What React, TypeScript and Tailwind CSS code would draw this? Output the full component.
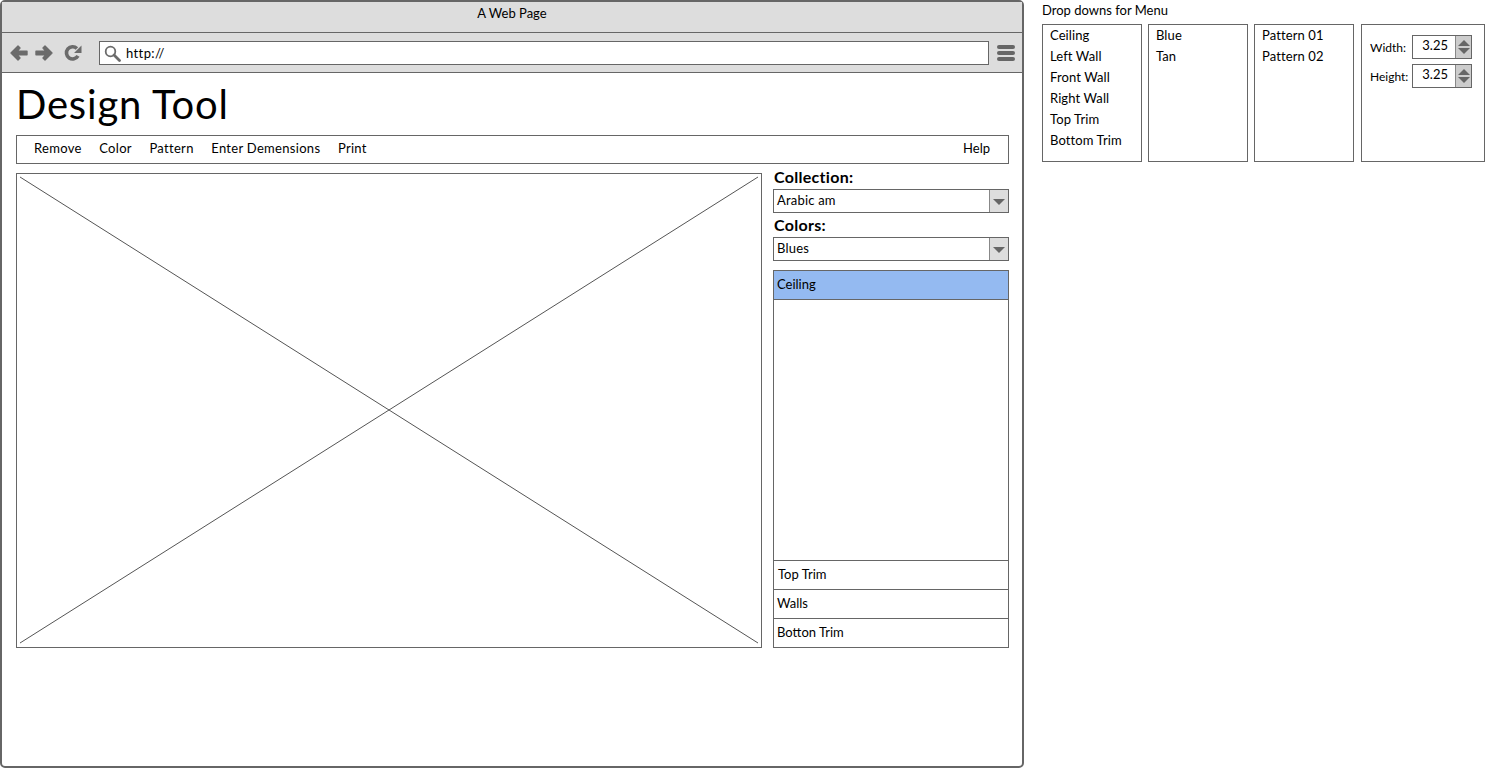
const fontStack = "font-['Lato','Noto_Sans',sans-serif]";

function ArrowIcon({ flip }: { flip?: boolean }) {
  return (
    <svg width="18" height="16" viewBox="0 0 18 16" className={flip ? "-scale-x-100" : ""}>
      <path d="M8 1 L1 8 L8 15 L10 13 L7 9.8 L17 9.8 L17 6.2 L7 6.2 L10 3 Z" fill="#6b6b6b" stroke="#6b6b6b" strokeWidth="1.4" strokeLinejoin="round" />
    </svg>
  );
}

function ReloadIcon() {
  return (
    <svg width="18" height="18" viewBox="0 0 17 17">
      <path d="M13.2 11.2 A5.8 5.8 0 1 1 12.2 4.2" fill="none" stroke="#6b6b6b" strokeWidth="3.4" />
      <path d="M16.5 1.5 L16.5 8.5 L9.5 8.5 Z" fill="#6b6b6b" />
    </svg>
  );
}

function SearchIcon() {
  return (
    <svg width="17" height="17" viewBox="0 0 17 17" className="shrink-0">
      <circle cx="6.5" cy="6.5" r="4.8" fill="none" stroke="#6b6b6b" strokeWidth="1.8" />
      <path d="M10 10 L15.5 15.5" stroke="#6b6b6b" strokeWidth="2.8" strokeLinecap="round" />
    </svg>
  );
}

function Select({ value }: { value: string }) {
  return (
    <div className="flex h-6 w-[236px] shrink-0 border border-[#666] bg-white">
      <div className="flex-1 pl-[3px] text-[13px] leading-[21px] tracking-[0.2px] text-black">{value}</div>
      <div className="flex w-[19px] items-center justify-center border-l border-[#888] bg-[#ddd]">
        <div className="mt-[2px] h-0 w-0 border-x-[6px] border-t-[6px] border-x-transparent border-t-[#666]" />
      </div>
    </div>
  );
}

function Stepper({ label }: { label: string }) {
  return (
    <div className="flex h-6 items-center justify-between">
      <span className="pt-[2px] text-[12px] text-black">{label}</span>
      <div className="flex h-6 w-[60px] border border-[#666] bg-white">
        <div className="flex-1 pr-[7px] text-right text-[13px] leading-[19px] text-black">3.25</div>
        <div className="flex w-[16px] flex-col items-center justify-center gap-[2px] border-l border-[#888] bg-[#ccc]">
          <div className="h-0 w-0 border-x-[6px] border-b-[6px] border-x-transparent border-b-[#666]" />
          <div className="h-0 w-0 border-x-[6px] border-t-[6px] border-x-transparent border-t-[#666]" />
        </div>
      </div>
    </div>
  );
}

function MenuBox({ items, width }: { items: string[]; width: string }) {
  return (
    <div className={`h-[138px] border border-[#666] bg-white pl-[7px] ${width}`}>
      {items.map((item) => (
        <div key={item} className="h-[21px] text-[13px] leading-[20px] tracking-[0.1px] text-black">
          {item}
        </div>
      ))}
    </div>
  );
}

export default function App() {
  return (
    <div className={`flex h-[768px] w-[1485px] overflow-hidden bg-white ${fontStack}`}>
      {/* browser window */}
      <div className="flex h-[768px] w-[1024px] shrink-0 flex-col rounded-[5px] border-2 border-[#666]">
        <div className="h-[31px] shrink-0 border-b border-[#666] bg-[#ddd] pt-[2px] text-center text-[13px] text-black">
          A Web Page
        </div>
        <div className="flex h-[40px] shrink-0 items-center border-b border-[#666] bg-[#ddd] pt-px">
          <div className="ml-2 flex w-[89px] items-center gap-[7px]">
            <ArrowIcon />
            <ArrowIcon flip />
            <div className="ml-[4px]">
              <ReloadIcon />
            </div>
          </div>
          <div className="flex h-6 w-[890px] items-center border border-[#666] bg-white pl-[4px]">
            <SearchIcon />
            <span className="ml-[5px] pt-[1px] text-[13px] tracking-[0.4px] text-black">http://</span>
          </div>
          <div className="ml-2 flex w-[18px] flex-col gap-[2px]">
            <div className="h-1 rounded-full bg-[#666]" />
            <div className="h-1 rounded-full bg-[#666]" />
            <div className="h-1 rounded-full bg-[#666]" />
          </div>
        </div>

        <div className="flex flex-1 flex-col px-[14px]">
          <h1 className="h-[62px] pt-[6px] text-[40px] leading-[50px] font-normal tracking-[0.8px] text-black">
            Design Tool
          </h1>
          <div className="flex h-[29px] w-[993px] items-center justify-between border border-[#666] pr-[18px] pb-[2px] pl-[17px] text-[13px] tracking-[0.3px] text-black">
            <div className="flex gap-[17.6px]">
              <span>Remove</span>
              <span>Color</span>
              <span>Pattern</span>
              <span>Enter Demensions</span>
              <span>Print</span>
            </div>
            <span className="tracking-normal">Help</span>
          </div>

          <div className="mt-[9px] flex gap-[11px]">
            <div className="h-[475px] w-[746px] border border-[#666]">
              <svg width="744" height="473" viewBox="0 0 744 473">
                <path d="M3 3 L741 469 M741 3 L3 469" stroke="#555" strokeWidth="1" fill="none" />
              </svg>
            </div>

            <div className="-mt-1 flex h-[479px] w-[236px] flex-col">
              <div className="h-5 pl-px text-[16px] leading-[16px] font-bold tracking-[0.3px] text-black">Collection:</div>
              <Select value="Arabic am" />
              <div className="h-6 pl-px text-[16px] leading-[24px] font-bold tracking-[0.3px] text-black">Colors:</div>
              <Select value="Blues" />
              <div className="mt-[9px] flex flex-1 flex-col border border-[#666] text-[13px] text-black">
                <div className="flex h-[29px] items-center border-b border-[#666] bg-[#94baf1] pl-[3px]">Ceiling</div>
                <div className="flex-1" />
                <div className="flex h-[29px] items-center border-t border-[#666] pl-[4px]">Top Trim</div>
                <div className="flex h-[29px] items-center border-t border-[#666] pl-[3px]">Walls</div>
                <div className="flex h-[29px] items-center border-t border-[#666] pl-[3px]">Botton Trim</div>
              </div>
            </div>
          </div>
        </div>
      </div>

      {/* drop downs */}
      <div className="ml-[18px] flex flex-col">
        <div className="h-6 pt-[1px] text-[13px] text-black">Drop downs for Menu</div>
        <div className="flex">
          <MenuBox width="w-[100px]" items={["Ceiling", "Left Wall", "Front Wall", "Right Wall", "Top Trim", "Bottom Trim"]} />
          <MenuBox width="ml-[6px] w-[100px]" items={["Blue", "Tan"]} />
          <MenuBox width="ml-[6px] w-[100px]" items={["Pattern 01", "Pattern 02"]} />
          <div className="ml-[7px] flex h-[138px] w-[124px] flex-col gap-[5px] border border-[#666] pt-[10px] pr-[12px] pl-[8px]">
            <Stepper label="Width:" />
            <Stepper label="Height:" />
          </div>
        </div>
      </div>
    </div>
  );
}
